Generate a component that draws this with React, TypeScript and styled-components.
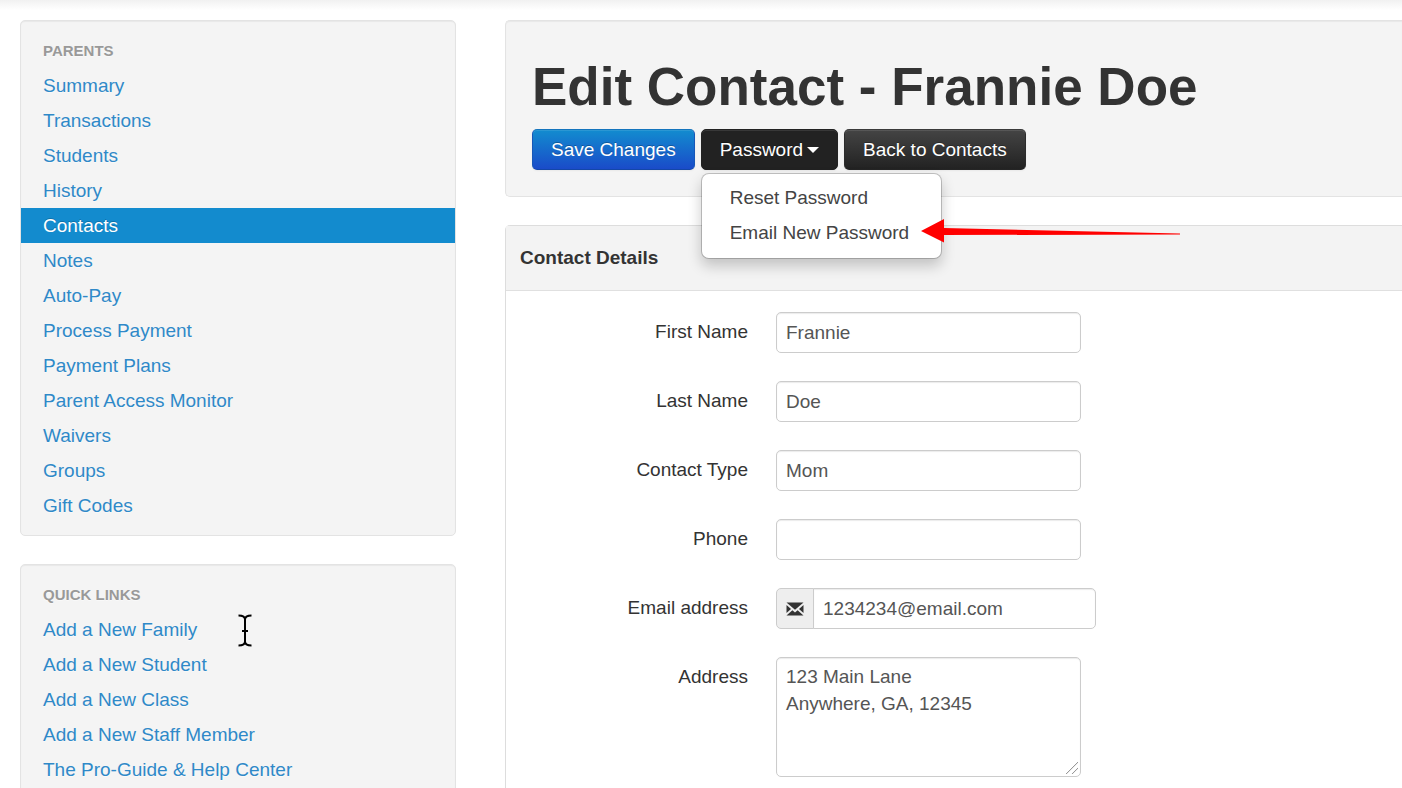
import React from 'react';
import styled, { createGlobalStyle, css } from 'styled-components';

const GlobalStyle = createGlobalStyle`
  *, *::before, *::after { box-sizing: border-box; }
  html { scrollbar-width: none; }
  body {
    margin: 0;
    background: #fff;
    color: #333;
    font-family: "Liberation Sans", Arial, sans-serif;
    font-size: 19px;
    line-height: 27px;
  }
  button, input, textarea { font: inherit; }
`;

const Page = styled.div`
  overflow-x: hidden;
`;

const TopShade = styled.div`
  height: 20px;
  background: linear-gradient(#f1f1f1, #fff 10px);
`;

const Columns = styled.div`
  display: grid;
  grid-template-columns: minmax(300px, 436px) minmax(0, 1fr);
  gap: 49px;
  padding-left: 20px;
`;

const Sidebar = styled.aside`
  display: flex;
  flex-direction: column;
  gap: 28px;
`;

const NavPanel = styled.nav`
  padding: 12px 0;
  background: #f4f4f4;
  border: 1px solid #e3e3e3;
  border-radius: 5px;
  box-shadow: inset 0 1px 1px rgba(0, 0, 0, 0.05);
`;

const NavHeading = styled.h2`
  margin: 0;
  padding: 0 22px;
  color: #999;
  font-size: 15px;
  line-height: 35px;
  text-transform: uppercase;
  text-shadow: 0 1px 0 rgba(255, 255, 255, 0.5);
`;

const NavList = styled.ul`
  margin: 0;
  padding: 0;
  list-style: none;
`;

const NavItem = styled.li`
  position: relative;
`;

const NavLink = styled.a<{ $active?: boolean }>`
  display: block;
  padding: 0 22px;
  line-height: 35px;
  text-decoration: none;
  color: #2f89c8;
  text-shadow: 0 1px 0 rgba(255, 255, 255, 0.5);
  ${({ $active }) =>
    $active &&
    css`
      background: #138bce;
      color: #fff;
      text-shadow: 0 -1px 0 rgba(0, 0, 0, 0.2);
    `}
`;

const TextCursor = styled.svg`
  position: absolute;
  left: 216px;
  top: 2px;
`;

const Main = styled.main`
  display: flex;
  flex-direction: column;
  gap: 28px;
`;

const Hero = styled.header`
  padding: 38px 26px 26px;
  background: #f4f4f4;
  border: 1px solid #e3e3e3;
  border-right: 0;
  border-radius: 5px 0 0 5px;
  box-shadow: inset 0 1px 1px rgba(0, 0, 0, 0.05);
`;

const Title = styled.h1`
  margin: 0 0 14px;
  font-size: 53px;
  line-height: 56px;
`;

const Toolbar = styled.div`
  display: flex;
  gap: 6px;
`;

const tones = {
  primary: css`
    background: linear-gradient(#128ccf, #1a4bc9);
    border-color: #1474bd #1757b8 #1447a8;
  `,
  dark: css`
    background: linear-gradient(#444, #222);
    border-color: #3a3a3a #2c2c2c #252525;
  `,
  pressed: css`
    background: #222;
    border-color: #222;
  `,
};

const Button = styled.button<{ $tone: keyof typeof tones }>`
  display: flex;
  align-items: center;
  gap: 4px;
  height: 41px;
  padding: 0 18px;
  border: 1px solid;
  border-radius: 5px;
  color: #fff;
  white-space: nowrap;
  text-shadow: 0 -1px 0 rgba(0, 0, 0, 0.25);
  box-shadow: inset 0 1px 0 rgba(255, 255, 255, 0.1), 0 1px 2px rgba(0, 0, 0, 0.05);
  ${({ $tone }) => tones[$tone]}
`;

const Caret = styled.span`
  border: 6px solid transparent;
  border-top-color: #fff;
  border-bottom: 0;
`;

const Dropdown = styled.div`
  position: relative;
`;

const Menu = styled.ul`
  position: absolute;
  z-index: 2;
  top: 100%;
  left: 0;
  width: 241px;
  margin: 3px 0 0;
  padding: 6px 0 8px;
  list-style: none;
  background: #fff;
  border: 1px solid rgba(0, 0, 0, 0.2);
  border-radius: 8px;
  background-clip: padding-box;
  box-shadow: 0 7px 14px rgba(0, 0, 0, 0.2);
`;

const MenuItem = styled.li`
  position: relative;
`;

const MenuLink = styled.a`
  display: block;
  padding: 0 28px;
  line-height: 35px;
  color: #444;
  text-decoration: none;
  white-space: nowrap;
`;

const Arrow = styled.svg`
  position: absolute;
  left: 218px;
  top: 2px;
`;

const Section = styled.section`
  background: #fff;
  border: 1px solid #ddd;
  border-right: 0;
  border-radius: 5px 0 0 5px;
`;

const SectionTitle = styled.h2`
  margin: 0;
  padding: 0 14px;
  font-size: 19px;
  line-height: 64px;
  background: #f3f3f3;
  border-bottom: 1px solid #e0e0e0;
`;

const Form = styled.form`
  display: flex;
  flex-direction: column;
  gap: 28px;
  padding: 21px 0 28px;
`;

const Field = styled.div`
  display: grid;
  grid-template-columns: 242px minmax(0, 1fr);
  gap: 28px;
`;

const Label = styled.label`
  padding-top: 6px;
  text-align: right;
`;

const control = css`
  display: block;
  border: 1px solid #ccc;
  border-radius: 5px;
  background: #fff;
  color: #555;
  box-shadow: inset 0 1px 1px rgba(0, 0, 0, 0.08);
  outline: none;
`;

const TextInput = styled.input`
  ${control}
  width: 305px;
  height: 41px;
  padding: 0 9px;
`;

const AddressBox = styled.textarea`
  ${control}
  width: 305px;
  height: 120px;
  padding: 5px 9px;

  &::-webkit-resizer {
    background: linear-gradient(
        135deg,
        transparent 50%,
        #999 52% 56%,
        transparent 58% 73%,
        #999 75% 79%,
        transparent 81%
      )
      0 0 / 13px 13px no-repeat;
  }
`;

const InputGroup = styled.div`
  display: flex;
`;

const AddOn = styled.span`
  display: flex;
  align-items: center;
  justify-content: center;
  width: 38px;
  background: #eee;
  border: 1px solid #ccc;
  border-radius: 5px 0 0 5px;
`;

const GroupedInput = styled(TextInput)`
  width: 283px;
  margin-left: -1px;
  border-radius: 0 5px 5px 0;
`;

const parentLinks = [
  'Summary', 'Transactions', 'Students', 'History', 'Contacts', 'Notes', 'Auto-Pay',
  'Process Payment', 'Payment Plans', 'Parent Access Monitor', 'Waivers', 'Groups', 'Gift Codes',
];

const quickLinks = [
  'Add a New Family', 'Add a New Student', 'Add a New Class', 'Add a New Staff Member',
  'The Pro-Guide & Help Center',
];

const textFields = [
  { id: 'first-name', label: 'First Name', value: 'Frannie' },
  { id: 'last-name', label: 'Last Name', value: 'Doe' },
  { id: 'contact-type', label: 'Contact Type', value: 'Mom' },
  { id: 'phone', label: 'Phone', value: '' },
];

const EnvelopeIcon = () => (
  <svg width="18" height="14" viewBox="0 0 18 14" aria-hidden="true">
    <path d="M0.5 0.5H17.5L9 7.8Z" fill="#333" />
    <path d="M0.5 3L5 7L0.5 11ZM17.5 3V11L13 7Z" fill="#333" />
    <path d="M0.5 13.5L6.4 8.2L9 10.4L11.6 8.2L17.5 13.5Z" fill="#333" />
  </svg>
);

export default function App() {
  return (
    <Page>
      <GlobalStyle />
      <TopShade />
      <Columns>
        <Sidebar>
          <NavPanel aria-label="Parents">
            <NavHeading>Parents</NavHeading>
            <NavList>
              {parentLinks.map((name) => (
                <NavItem key={name}>
                  <NavLink href="#" $active={name === 'Contacts'}>{name}</NavLink>
                </NavItem>
              ))}
            </NavList>
          </NavPanel>
          <NavPanel aria-label="Quick links">
            <NavHeading>Quick Links</NavHeading>
            <NavList>
              {quickLinks.map((name, i) => (
                <NavItem key={name}>
                  <NavLink href="#">{name}</NavLink>
                  {i === 0 && (
                    <TextCursor width="16" height="33" viewBox="0 0 16 33" aria-hidden="true">
                      <path
                        d="M1.5 1.5C5 1.5 8 2.5 8 5.5C8 2.5 11 1.5 14.5 1.5M8 4.5V28.5M1.5 31.5C5 31.5 8 30.5 8 27.5C8 30.5 11 31.5 14.5 31.5M5 17H11"
                        fill="none"
                        stroke="#000"
                        strokeWidth="2"
                      />
                    </TextCursor>
                  )}
                </NavItem>
              ))}
            </NavList>
          </NavPanel>
        </Sidebar>
        <Main>
          <Hero>
            <Title>Edit Contact - Frannie Doe</Title>
            <Toolbar>
              <Button type="submit" form="contact-form" $tone="primary">Save Changes</Button>
              <Dropdown>
                <Button type="button" aria-haspopup="menu" aria-expanded="true" $tone="pressed">
                  Password <Caret />
                </Button>
                <Menu>
                  <MenuItem><MenuLink href="#">Reset Password</MenuLink></MenuItem>
                  <MenuItem>
                    <MenuLink href="#">Email New Password</MenuLink>
                    <Arrow width="262" height="28" viewBox="0 0 262 28" aria-hidden="true">
                      <path d="M1 14L24 2V11L260 16.4V17.6L24 18V25.5Z" fill="#f00" />
                    </Arrow>
                  </MenuItem>
                </Menu>
              </Dropdown>
              <Button type="button" $tone="dark">Back to Contacts</Button>
            </Toolbar>
          </Hero>
          <Section>
            <SectionTitle>Contact Details</SectionTitle>
            <Form id="contact-form" onSubmit={(e) => e.preventDefault()}>
              {textFields.map(({ id, label, value }) => (
                <Field key={id}>
                  <Label htmlFor={id}>{label}</Label>
                  <TextInput id={id} type="text" defaultValue={value} />
                </Field>
              ))}
              <Field>
                <Label htmlFor="email">Email address</Label>
                <InputGroup>
                  <AddOn><EnvelopeIcon /></AddOn>
                  <GroupedInput id="email" type="email" defaultValue="1234234@email.com" />
                </InputGroup>
              </Field>
              <Field>
                <Label htmlFor="address">Address</Label>
                <AddressBox id="address" defaultValue={'123 Main Lane\nAnywhere, GA, 12345'} />
              </Field>
            </Form>
          </Section>
        </Main>
      </Columns>
    </Page>
  );
}
